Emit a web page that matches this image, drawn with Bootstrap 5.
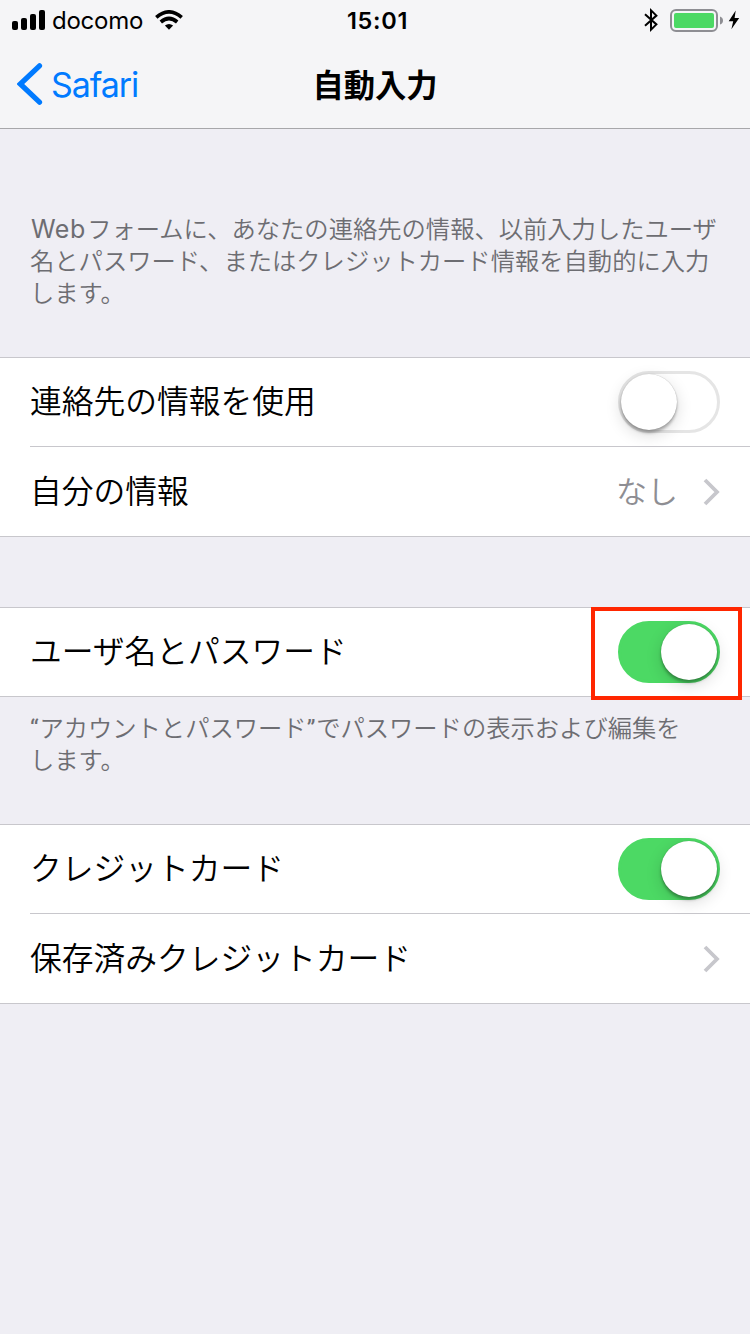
<!DOCTYPE html>
<html lang="ja">
<head>
<meta charset="utf-8">
<meta name="viewport" content="width=device-width, initial-scale=1">
<title>自動入力</title>
<link href="https://cdn.jsdelivr.net/npm/bootstrap@5.3.0/dist/css/bootstrap.min.css" rel="stylesheet">
<style>
  body { background: #efeef4; color: #000; font-family: Inter, "Noto Sans CJK JP", sans-serif; min-height: 1334px; overflow-x: hidden; }
  svg { display: block; flex: none; }
  .top-area { height: 129px; background: #f5f5f7; border-bottom: 1px solid #a7a7aa; }
  .side { flex: 1 1 0; min-width: 0; }
  .status { height: 40px; padding: 0 10px 0 12px; line-height: 40px; }
  .carrier { font-size: 24px; margin: 2px 12px 0 7px; letter-spacing: -.25px; }
  .clock { font-size: 23.5px; font-weight: 600; letter-spacing: .7px; padding: 2px 0 0 3px; }
  .battery { margin-left: 12px; }
  .bolt { margin-left: 4px; }
  .titlebar { height: 88px; padding: 0 17px; line-height: 88px; }
  .back { color: #007aff; font-size: 34px; letter-spacing: -1.1px; }
  .back span { margin: 2px 0 0 8px; }
  .page-title { font-size: 31.3px; font-weight: 700; padding-top: 3px; }
  .note { color: #6d6d72; font-size: 24.3px; line-height: 32px; font-weight: 350; padding: 0 30px 48px; white-space: nowrap; }
  .note .latin { font-size: 25px; font-weight: 400; line-height: 1; letter-spacing: .5px; margin: 0 1.4px 0 1px; }
  .quote-mark { font-family: Roboto, sans-serif; font-weight: 400; line-height: 1; letter-spacing: .8px; }
  .intro { padding-top: 84px; }
  .hint { padding-top: 15px; }
  .group { background: #fff; border: solid #c8c7cc; border-width: 1px 0; }
  .entry { height: 88px; margin-left: 30px; padding-right: 30px; font-size: 31.75px; font-weight: 350; line-height: 88px; white-space: nowrap; }
  .entry + .entry { height: 90px; border-top: 1px solid #c8c7cc; }
  .gap-block { height: 70px; }
  .value-text { color: #8e8e93; margin-right: 25px; font-size: 31px; }
  .toggle { width: 102px; height: 62px; border-radius: 31px; border: 3px solid #e5e5e5; display: flex; align-items: center; }
  .toggle i { width: 56px; height: 56px; border-radius: 50%; background: #fff; box-shadow: 0 5px 16px rgba(0,0,0,.15), 0 3px 3px rgba(0,0,0,.28), 0 0 1px rgba(0,0,0,.3); flex: none; }
  .toggle.on { background: #4cd964; border-color: #4cd964; justify-content: flex-end; }
  .marker { position: absolute; left: 591px; top: -1px; width: 151px; height: 93px; border: 4px solid #ff2600; }
</style>
</head>
<body>
<header class="top-area">
  <div class="status d-flex align-items-center">
    <div class="side d-flex align-items-center">
      <svg width="33" height="20" viewBox="0 0 33 20"><rect y="11" width="6" height="9" rx="2"/><rect x="9" y="8" width="6" height="12" rx="2"/><rect x="18" y="4" width="6" height="16" rx="2"/><rect x="27" width="6" height="20" rx="2"/></svg>
      <span class="carrier">docomo</span>
      <svg width="28" height="20" viewBox="0 0 28 20"><g fill="none" stroke="#000" stroke-width="3.7"><path d="M1.3 7.3Q14-3.5 26.7 7.3"/><path d="M5.8 12Q14 5 22.2 12"/></g><path d="M9.9 15.6Q14 12.2 18.1 15.6L14 19.8Z"/></svg>
    </div>
    <div class="clock">15:01</div>
    <div class="side d-flex align-items-center justify-content-end">
      <svg width="14" height="24" viewBox="0 0 14 24"><path d="M1 6.3L12.4 16.4L7 21.6V2.4L12.4 7.6L1 17.7" fill="none" stroke="#000" stroke-width="2"/></svg>
      <svg class="battery" width="54" height="24" viewBox="0 0 54 24"><rect x="1" y="2" width="46" height="21" rx="5" fill="none" stroke="#8e8e93" stroke-width="2"/><rect x="4" y="5" width="40" height="15" rx="2" fill="#4cd964"/><path d="M50 8.5q3 1 3 4t-3 4z" fill="#8e8e93"/></svg>
      <svg class="bolt" width="12" height="20" viewBox="0 0 12 20"><path d="M7.7.6L.7 11.2H5.2L3.4 19.3L11.2 8H6.6Z"/></svg>
    </div>
  </div>
  <nav class="titlebar d-flex align-items-center">
    <div class="side back d-flex align-items-center">
      <svg width="26" height="42" viewBox="0 0 26 42"><path d="M22.5 2.8L3.3 21L22.5 39.2" fill="none" stroke="#007aff" stroke-width="5.2" stroke-linecap="round"/></svg>
      <span>Safari</span>
    </div>
    <div class="page-title">自動入力</div>
    <div class="side"></div>
  </nav>
</header>
<main>
  <p class="note intro mb-0"><span class="latin">Web</span>フォームに、あなたの連絡先の情報、以前入力したユーザ<br>名とパスワード、またはクレジットカード情報を自動的に入力<br>します。</p>
  <section class="group">
    <div class="entry d-flex align-items-center justify-content-between"><span>連絡先の情報を使用</span><span class="toggle" role="switch" aria-checked="false"><i></i></span></div>
    <div class="entry d-flex align-items-center"><span class="me-auto">自分の情報</span><span class="value-text">なし</span>
      <svg width="17" height="28" viewBox="0 0 17 28"><path d="M2 2L14 14L2 26" fill="none" stroke="#c7c7cc" stroke-width="3.8"/></svg></div>
  </section>
  <div class="gap-block"></div>
  <section class="group position-relative">
    <div class="entry d-flex align-items-center justify-content-between"><span>ユーザ名とパスワード</span><span class="toggle on" role="switch" aria-checked="true"><i></i></span></div>
    <div class="marker"></div>
  </section>
  <p class="note hint mb-0"><span class="quote-mark">“</span>アカウントとパスワード<span class="quote-mark">”</span>でパスワードの表示および編集を<br>します。</p>
  <section class="group">
    <div class="entry d-flex align-items-center justify-content-between"><span>クレジットカード</span><span class="toggle on" role="switch" aria-checked="true"><i></i></span></div>
    <div class="entry d-flex align-items-center"><span class="me-auto">保存済みクレジットカード</span>
      <svg width="17" height="28" viewBox="0 0 17 28"><path d="M2 2L14 14L2 26" fill="none" stroke="#c7c7cc" stroke-width="3.8"/></svg></div>
  </section>
</main>
<script src="https://cdn.jsdelivr.net/npm/bootstrap@5.3.0/dist/js/bootstrap.bundle.min.js"></script>
</body>
</html>
